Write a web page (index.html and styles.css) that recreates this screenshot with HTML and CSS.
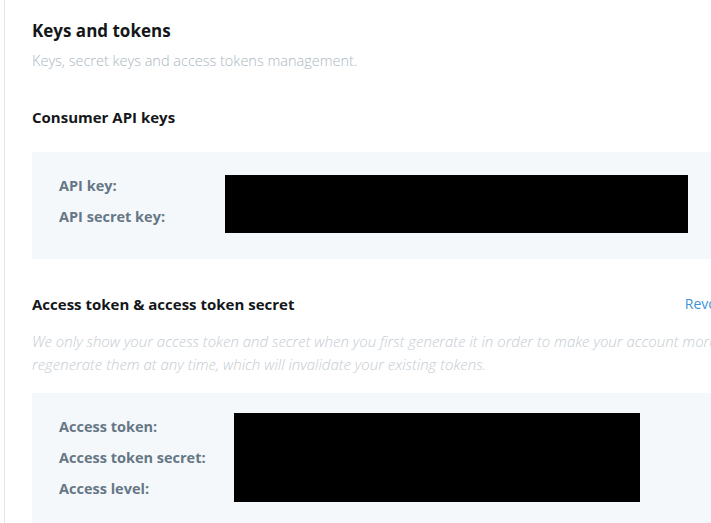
FILE: index.html
```html
<!DOCTYPE html>
<html>
<head>
<meta charset="utf-8">
<link rel="stylesheet" href="styles.css">
</head>
<body>
<div class="frame">
  <div class="content">
    <h1 class="title">Keys and tokens</h1>
    <p class="subtitle">Keys, secret keys and access tokens management.</p>

    <h2 class="section-title consumer">Consumer API keys</h2>
    <div class="panel panel-consumer">
      <div class="labels">
        <span class="label">API key:</span>
        <span class="label">API secret key:</span>
      </div>
      <div class="redact redact-consumer"></div>
    </div>

    <div class="section-head">
      <h2 class="section-title">Access token &amp; access token secret</h2>
      <a class="action" href="#">Revoke</a>
    </div>
    <p class="note">We only show your access token and secret when you first generate it in order to make your account more secure. You can regenerate them at any time, which will invalidate your existing tokens.</p>
    <div class="panel panel-access">
      <div class="labels labels-access">
        <span class="label">Access token:</span>
        <span class="label">Access token secret:</span>
        <span class="label">Access level:</span>
      </div>
      <div class="redact redact-access"></div>
    </div>
  </div>
</div>
</body>
</html>
```
FILE: styles.css
```css
html, body {
  margin: 0;
  padding: 0;
  background: #ffffff;
  overflow: hidden;
}
body {
  width: 711px;
  height: 523px;
  font-family: "Open Sans", "Noto Sans", sans-serif;
  color: #14171a;
}
.frame {
  margin-left: 4px;
  border-left: 1px solid #e1e8ed;
  height: 523px;
  padding-left: 27px;
}
.content {
  width: 700px;
  display: flex;
  flex-direction: column;
  padding-top: 19px;
}
.title {
  margin: 0;
  font-size: 17px;
  line-height: 24px;
  font-weight: 700;
}
.subtitle {
  margin: 8px 0 0;
  font-size: 14.5px;
  line-height: 20px;
  font-weight: 300;
  color: #aab8c2;
}
.section-title {
  margin: 0;
  font-size: 15px;
  line-height: 20px;
  font-weight: 700;
}
.consumer {
  margin-top: 36px;
}
.panel {
  background: #f5f8fa;
  display: flex;
  padding-left: 27px;
}
.panel-consumer {
  margin-top: 25px;
  padding-top: 23px;
  padding-bottom: 26px;
}
.labels {
  width: 166px;
  display: flex;
  flex-direction: column;
  gap: 9px;
  flex: none;
}
.labels-access {
  width: 175px;
  margin-top: 3px;
}
.label {
  font-size: 14.5px;
  line-height: 22px;
  font-weight: 700;
  color: #657786;
}
.redact {
  background: #000000;
  flex: none;
}
.redact-consumer {
  width: 463px;
  height: 58px;
}
.section-head {
  margin-top: 35px;
  display: flex;
  justify-content: space-between;
  align-items: center;
}
.action {
  font-size: 14px;
  line-height: 20px;
  color: #3b94d9;
  text-decoration: none;
}
.note {
  margin: 16px 0 0;
  font-size: 15px;
  line-height: 23px;
  font-style: italic;
  font-weight: 300;
  color: #c3ccd3;
  width: 830px;
}
.panel-access {
  margin-top: 17px;
  padding-top: 20px;
  padding-bottom: 30px;
}
.redact-access {
  width: 406px;
  height: 89px;
}
```
